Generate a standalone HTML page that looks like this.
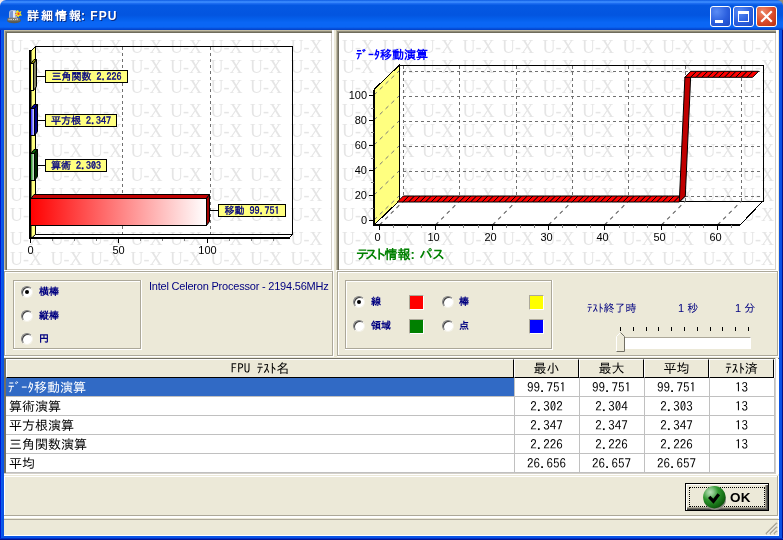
<!DOCTYPE html>
<html lang="ja">
<head>
<meta charset="utf-8">
<title>詳細情報: FPU</title>
<style>
html,body{margin:0;padding:0;}
body{width:783px;height:540px;overflow:hidden;background:#0831d9;font-family:"Liberation Sans","IPAGothic",sans-serif;font-size:12px;position:relative;}
.abs{position:absolute;}
#win{position:absolute;left:0;top:0;width:783px;height:540px;background:#0831d9;overflow:hidden;will-change:transform;}
#title{position:absolute;left:0;top:0;width:783px;height:30px;border-radius:6px 6px 0 0;
 background:linear-gradient(to bottom,#0a58e0 0%,#2f7ff8 4%,#3f8fff 7%,#1a6af0 12%,#0458e2 18%,#0355e0 50%,#0560ec 65%,#0a66f5 75%,#0a66f5 90%,#0650dc 95%,#0340c4 100%);}
#title .cap{position:absolute;left:27px;top:10px;line-height:13px;color:#fff;font-weight:bold;font-size:12px;letter-spacing:2px;text-shadow:1px 1px 0 #0a2a80;white-space:nowrap;}
.tb{position:absolute;top:6px;width:21px;height:21px;box-sizing:border-box;border:1px solid #fff;border-radius:3px;background:radial-gradient(circle at 30% 25%,#5a8cf5 0%,#2b5fde 55%,#1d49c4 100%);}
.tb.cl{background:radial-gradient(circle at 30% 25%,#ee8a6a 0%,#d9492a 55%,#b8300f 100%);}
#client{position:absolute;left:4px;top:30px;width:775px;height:506px;background:#ece9d8;}
.box{position:absolute;box-sizing:border-box;}
.radio{position:absolute;width:12px;height:12px;border-radius:50%;background:#fff;box-sizing:border-box;border:1px solid;border-color:#808080 #f4f2e8 #f4f2e8 #808080;box-shadow:inset 1px 1px 0 #404040;}
.radio.on::after{content:"";position:absolute;left:3px;top:3px;width:4px;height:4px;border-radius:50%;background:#000;}
.rl{position:absolute;color:#000080;font-weight:bold;font-size:10px;white-space:nowrap;line-height:11px;}
.sq{position:absolute;width:15px;height:15px;box-sizing:border-box;border:1px solid;border-color:#aca899 #fff #fff #aca899;}
.t{position:absolute;white-space:nowrap;}
.grp{position:absolute;box-sizing:border-box;border:1px solid;border-color:#aca899 #fff #fff #aca899;}
.grp::after{content:"";position:absolute;left:0;top:0;right:0;bottom:0;border:1px solid;border-color:#fff #aca899 #aca899 #fff;}
svg text{font-family:"Liberation Sans","IPAGothic",sans-serif;}
.cell{position:absolute;height:19px;line-height:19px;font-size:13px;white-space:nowrap;color:#000;font-family:"IPAGothic","Liberation Sans",sans-serif;}
</style>
</head>
<body>
<div id="win">
<div class="box" style="left:0;top:0;width:8px;height:8px;background:#f3e9ea"></div>
<div class="box" style="left:775px;top:0;width:8px;height:8px;background:#8f8c7c"></div>
<div id="title">
  <div class="cap">詳細情報<span style="letter-spacing:1px;font-size:12px;margin-left:-2px">: FPU</span></div>
  <svg class="abs" style="left:6px;top:9px" width="17" height="15" viewBox="0 0 17 15">
    <ellipse cx="8" cy="11.5" rx="7" ry="2.8" fill="#5a5a52"/>
    <path d="M3 9 L3 4 Q3 1 6 1 L9 1 Q11 1 11 4 L11 9 Z" fill="#a9b9d9"/>
    <path d="M4 9 L4 4 Q4 2 6 2 L7 2 L7 9 Z" fill="#7f98cf"/>
    <rect x="7" y="2" width="2" height="7" fill="#dfe7f5"/>
    <path d="M12 1 L13 3 L15.5 2 L14.5 4.5 L16 6.5 L13.5 6.8 L12 8.5 L10.8 6.5 L8.8 6 L10.5 4.2 L10 2.2 Z" fill="#f6e81a"/>
    <rect x="11.5" y="3.5" width="2" height="2.5" fill="#f03a2a"/>
    <rect x="9.3" y="4" width="1" height="1" fill="#f03a2a"/><rect x="9.8" y="6.2" width="1" height="1" fill="#f03a2a"/>
    <rect x="1.5" y="8.8" width="12.5" height="3.4" rx="1.2" fill="#6e6e66"/>
    <path d="M3 9.8 L3 11.2 M4.2 9.8 L4.2 11.2 M5.6 9.8 L5.6 11.2 M7 9.8 L8 11.2 M8 9.8 L7 11.2 M9.5 9.8 L9.5 11.2 M10.5 9.8 L11.8 9.8 M11.2 9.8 L11.2 11.2" stroke="#e8e8e8" stroke-width="0.8" fill="none"/>
  </svg>
  <div class="tb" style="left:710px"><div style="position:absolute;left:4px;top:13px;width:8px;height:3px;background:#fff"></div></div>
  <div class="tb" style="left:733px"><div style="position:absolute;left:4px;top:4px;width:11px;height:11px;box-sizing:border-box;border:1px solid #fff;border-top-width:3px"></div></div>
  <div class="tb cl" style="left:756px"><svg width="19" height="19" viewBox="0 0 19 19" style="position:absolute;left:0;top:0"><path d="M5 5 L14 14 M14 5 L5 14" stroke="#fff" stroke-width="2.2" stroke-linecap="square"/></svg></div>
</div>
<div id="client"></div>
<div class="box" style="left:0;top:30px;width:1px;height:510px;background:#0019cf"></div>
<div class="box" style="left:1px;top:30px;width:3px;height:508px;background:linear-gradient(to right,#0b5ff0,#0a55e6,#0a50e0)"></div>
<div class="box" style="left:779px;top:30px;width:3px;height:508px;background:linear-gradient(to right,#0a50e0,#0a55e6,#0a4fe0)"></div>
<div class="box" style="left:782px;top:30px;width:1px;height:510px;background:#00138c"></div>
<div class="box" style="left:1px;top:536px;width:781px;height:2px;background:#0a55e6"></div>
<div class="box" style="left:0px;top:538px;width:783px;height:1px;background:#0030c8"></div>
<div class="box" style="left:0px;top:539px;width:783px;height:1px;background:#00138c"></div>
<div class="box" style="left:778px;top:476px;width:1px;height:60px;background:#fff"></div>


<div class="box" style="left:4px;top:30px;width:328px;height:240px;background:#c2bca4"></div>
<div class="box" style="left:5px;top:31px;width:327px;height:239px;background:#8f8b78"></div>
<div class="box" style="left:6px;top:32px;width:326px;height:238px;background:#6f6c5c"></div>
<div class="box" style="left:4px;top:270px;width:330px;height:2px;background:#fff"></div>
<div class="box" style="left:332px;top:30px;width:2px;height:242px;background:#fff"></div>
<div class="box" style="left:7px;top:33px;width:325px;height:237px;background:#d4d0c8"></div>
<div class="box" style="left:7px;top:33px;width:324px;height:236px;background:#fff"></div>

<div class="box" style="left:336px;top:30px;width:440px;height:240px;background:#c2bca4"></div>
<div class="box" style="left:337px;top:31px;width:439px;height:239px;background:#8f8b78"></div>
<div class="box" style="left:338px;top:32px;width:438px;height:238px;background:#6f6c5c"></div>
<div class="box" style="left:336px;top:270px;width:442px;height:2px;background:#fff"></div>
<div class="box" style="left:776px;top:30px;width:2px;height:242px;background:#fff"></div>
<div class="box" style="left:339px;top:33px;width:437px;height:237px;background:#d4d0c8"></div>
<div class="box" style="left:339px;top:33px;width:436px;height:236px;background:#fff"></div>

<svg class="abs" style="left:0;top:0" width="783" height="540" viewBox="0 0 783 540" shape-rendering="crispEdges">
<defs><pattern id="uxL" x="7" y="33" width="80" height="64" patternUnits="userSpaceOnUse"><text x="3" y="20" font-size="18" fill="#e5e5e5" style="font-family:'Liberation Serif',serif">U-X</text><text x="43.5" y="20" font-size="18" fill="#e5e5e5" style="font-family:'Liberation Serif',serif">U-X</text><text x="3" y="40" font-size="18" fill="#e5e5e5" style="font-family:'Liberation Serif',serif">U-X</text><text x="43.5" y="40" font-size="18" fill="#e5e5e5" style="font-family:'Liberation Serif',serif">U-X</text><text x="3" y="60" font-size="18" fill="#e5e5e5" style="font-family:'Liberation Serif',serif">U-X</text><text x="43.5" y="60" font-size="18" fill="#e5e5e5" style="font-family:'Liberation Serif',serif">U-X</text></pattern><pattern id="uxR" x="339" y="33" width="80" height="64" patternUnits="userSpaceOnUse"><text x="3" y="20" font-size="18" fill="#e5e5e5" style="font-family:'Liberation Serif',serif">U-X</text><text x="43.5" y="20" font-size="18" fill="#e5e5e5" style="font-family:'Liberation Serif',serif">U-X</text><text x="3" y="40" font-size="18" fill="#e5e5e5" style="font-family:'Liberation Serif',serif">U-X</text><text x="43.5" y="40" font-size="18" fill="#e5e5e5" style="font-family:'Liberation Serif',serif">U-X</text><text x="3" y="60" font-size="18" fill="#e5e5e5" style="font-family:'Liberation Serif',serif">U-X</text><text x="43.5" y="60" font-size="18" fill="#e5e5e5" style="font-family:'Liberation Serif',serif">U-X</text></pattern>
<linearGradient id="redg" x1="0" y1="0" x2="1" y2="0"><stop offset="0" stop-color="#ff0000"/><stop offset="1" stop-color="#ffffff"/></linearGradient>
<linearGradient id="blug" x1="0" y1="0" x2="1" y2="0"><stop offset="0" stop-color="#0000ff"/><stop offset="1" stop-color="#ffffff"/></linearGradient>
<linearGradient id="grng" x1="0" y1="0" x2="1" y2="0"><stop offset="0" stop-color="#008000"/><stop offset="1" stop-color="#ffffff"/></linearGradient>
<linearGradient id="yelg" x1="0" y1="0" x2="1" y2="0"><stop offset="0" stop-color="#ffff00"/><stop offset="1" stop-color="#ffffff"/></linearGradient>
</defs>
<rect x="7" y="33" width="324" height="236" fill="url(#uxL)"/>
<rect x="339" y="33" width="436" height="236" fill="url(#uxR)"/>
<polygon points="31,51 35.5,46.5 35.5,234.5 31,239" fill="#ffff80" stroke="#000" stroke-width="1" shape-rendering="auto"/>
<rect x="35.5" y="46.5" width="257.0" height="188.0" fill="none" stroke="#000"/>
<polygon points="31,238.5 35.5,234.5 292.5,234.5 288.5,238.5" fill="#fff" stroke="#000" stroke-width="1" shape-rendering="auto"/>
<line x1="122.5" y1="46.5" x2="122.5" y2="234.5" stroke="#707070" stroke-width="1" stroke-dasharray="3 3" />
<line x1="210.5" y1="46.5" x2="210.5" y2="234.5" stroke="#707070" stroke-width="1" stroke-dasharray="3 3" />
<line x1="30" y1="50" x2="30" y2="239" stroke="#000" stroke-width="2" />
<line x1="29" y1="238" x2="290" y2="238" stroke="#000" stroke-width="2" />
<line x1="30.5" y1="239" x2="30.5" y2="243" stroke="#000" stroke-width="1" />
<line x1="52.5" y1="239" x2="52.5" y2="241" stroke="#808080" stroke-width="1" />
<line x1="74.5" y1="239" x2="74.5" y2="241" stroke="#808080" stroke-width="1" />
<line x1="96.5" y1="239" x2="96.5" y2="241" stroke="#808080" stroke-width="1" />
<line x1="118.5" y1="239" x2="118.5" y2="243" stroke="#000" stroke-width="1" />
<line x1="140.5" y1="239" x2="140.5" y2="241" stroke="#808080" stroke-width="1" />
<line x1="162.5" y1="239" x2="162.5" y2="241" stroke="#808080" stroke-width="1" />
<line x1="184.5" y1="239" x2="184.5" y2="241" stroke="#808080" stroke-width="1" />
<line x1="207.5" y1="239" x2="207.5" y2="243" stroke="#000" stroke-width="1" />
<line x1="229.5" y1="239" x2="229.5" y2="241" stroke="#808080" stroke-width="1" />
<line x1="251.5" y1="239" x2="251.5" y2="241" stroke="#808080" stroke-width="1" />
<line x1="273.5" y1="239" x2="273.5" y2="241" stroke="#808080" stroke-width="1" />
<polygon points="31,63.5 34,59.5 36.5,59.5 33.5,63.5" fill="#a0a000" stroke="#000" stroke-width="1" shape-rendering="auto"/>
<polygon points="33.5,63.5 36.5,59.5 36.5,86.5 33.5,90.5" fill="#808060" stroke="#000" stroke-width="1" shape-rendering="auto"/>
<rect x="30.5" y="63.5" width="3.0" height="27" fill="url(#yelg)" stroke="#000"/>
<polygon points="31,108.5 34,104.5 37.5,104.5 34.5,108.5" fill="#0000a0" stroke="#000" stroke-width="1" shape-rendering="auto"/>
<polygon points="34.5,108.5 37.5,104.5 37.5,131.5 34.5,135.5" fill="#000080" stroke="#000" stroke-width="1" shape-rendering="auto"/>
<rect x="30.5" y="108.5" width="4.0" height="27" fill="url(#blug)" stroke="#000"/>
<polygon points="31,153.5 34,149.5 37.5,149.5 34.5,153.5" fill="#006000" stroke="#000" stroke-width="1" shape-rendering="auto"/>
<polygon points="34.5,153.5 37.5,149.5 37.5,176.5 34.5,180.5" fill="#002800" stroke="#000" stroke-width="1" shape-rendering="auto"/>
<rect x="30.5" y="153.5" width="4.0" height="27" fill="url(#grng)" stroke="#000"/>
<polygon points="31,198.5 34,194.5 209.5,194.5 206.5,198.5" fill="#c00000" stroke="#000" stroke-width="1" shape-rendering="auto"/>
<polygon points="206.5,198.5 209.5,194.5 209.5,221.5 206.5,225.5" fill="#a00000" stroke="#000" stroke-width="1" shape-rendering="auto"/>
<rect x="30.5" y="198.5" width="176.0" height="27" fill="url(#redg)" stroke="#000"/>
<line x1="37" y1="76.5" x2="45" y2="76.5" stroke="#000" stroke-width="1" />
<rect x="45.5" y="70.5" width="82" height="12" fill="#ffff80" stroke="#000"/>
<text x="86.5" y="79.5" font-size="10" fill="#000080" stroke="#000080" stroke-width="0.35" text-anchor="middle" shape-rendering="auto" style="font-family:IPAGothic,'Liberation Sans',sans-serif">三角関数 2.226</text>
<line x1="37" y1="120.5" x2="45" y2="120.5" stroke="#000" stroke-width="1" />
<rect x="45.5" y="114.5" width="71" height="12" fill="#ffff80" stroke="#000"/>
<text x="81.0" y="123.5" font-size="10" fill="#000080" stroke="#000080" stroke-width="0.35" text-anchor="middle" shape-rendering="auto" style="font-family:IPAGothic,'Liberation Sans',sans-serif">平方根 2.347</text>
<line x1="37" y1="165.5" x2="45" y2="165.5" stroke="#000" stroke-width="1" />
<rect x="45.5" y="159.5" width="61" height="12" fill="#ffff80" stroke="#000"/>
<text x="76.0" y="168.5" font-size="10" fill="#000080" stroke="#000080" stroke-width="0.35" text-anchor="middle" shape-rendering="auto" style="font-family:IPAGothic,'Liberation Sans',sans-serif">算術 2.303</text>
<line x1="210" y1="210.5" x2="218" y2="210.5" stroke="#000" stroke-width="1" />
<rect x="218.5" y="204.5" width="67" height="12" fill="#ffff80" stroke="#000"/>
<text x="252.0" y="213.5" font-size="10" fill="#000080" stroke="#000080" stroke-width="0.35" text-anchor="middle" shape-rendering="auto" style="font-family:IPAGothic,'Liberation Sans',sans-serif">移動 99.751</text>
<text x="30.5" y="254" font-size="11" fill="#000" text-anchor="middle">0</text>
<text x="118.5" y="254" font-size="11" fill="#000" text-anchor="middle">50</text>
<text x="207.5" y="254" font-size="11" fill="#000" text-anchor="middle">100</text>
<polygon points="374.0,89.5 399.0,65.5 399.0,201.0 374.0,225.0" fill="#ffff80" stroke="#000" stroke-width="1" />
<line x1="374.0" y1="220" x2="399.0" y2="196" stroke="#787878" stroke-width="1" stroke-dasharray="4 4" shape-rendering="auto"/>
<line x1="374.0" y1="195" x2="399.0" y2="171" stroke="#787878" stroke-width="1" stroke-dasharray="4 4" shape-rendering="auto"/>
<line x1="374.0" y1="170" x2="399.0" y2="146" stroke="#787878" stroke-width="1" stroke-dasharray="4 4" shape-rendering="auto"/>
<line x1="374.0" y1="145" x2="399.0" y2="121" stroke="#787878" stroke-width="1" stroke-dasharray="4 4" shape-rendering="auto"/>
<line x1="374.0" y1="120" x2="399.0" y2="96" stroke="#787878" stroke-width="1" stroke-dasharray="4 4" shape-rendering="auto"/>
<line x1="374.0" y1="95" x2="399.0" y2="71" stroke="#787878" stroke-width="1" stroke-dasharray="4 4" shape-rendering="auto"/>
<rect x="399.5" y="65.5" width="364.0" height="135.5" fill="none" stroke="#000"/>
<line x1="403.0" y1="196.5" x2="763.0" y2="196.5" stroke="#707070" stroke-width="1" stroke-dasharray="3 3" />
<line x1="403.0" y1="171.5" x2="763.0" y2="171.5" stroke="#707070" stroke-width="1" stroke-dasharray="3 3" />
<line x1="403.0" y1="146.5" x2="763.0" y2="146.5" stroke="#707070" stroke-width="1" stroke-dasharray="3 3" />
<line x1="403.0" y1="121.5" x2="763.0" y2="121.5" stroke="#707070" stroke-width="1" stroke-dasharray="3 3" />
<line x1="403.0" y1="96.5" x2="763.0" y2="96.5" stroke="#707070" stroke-width="1" stroke-dasharray="3 3" />
<line x1="403.0" y1="71.5" x2="763.0" y2="71.5" stroke="#707070" stroke-width="1" stroke-dasharray="3 3" />
<line x1="403.5" y1="65.5" x2="403.5" y2="201.0" stroke="#707070" stroke-width="1" stroke-dasharray="3 3" />
<line x1="459.5" y1="65.5" x2="459.5" y2="201.0" stroke="#707070" stroke-width="1" stroke-dasharray="3 3" />
<line x1="516.5" y1="65.5" x2="516.5" y2="201.0" stroke="#707070" stroke-width="1" stroke-dasharray="3 3" />
<line x1="572.5" y1="65.5" x2="572.5" y2="201.0" stroke="#707070" stroke-width="1" stroke-dasharray="3 3" />
<line x1="628.5" y1="65.5" x2="628.5" y2="201.0" stroke="#707070" stroke-width="1" stroke-dasharray="3 3" />
<line x1="685.5" y1="65.5" x2="685.5" y2="201.0" stroke="#707070" stroke-width="1" stroke-dasharray="3 3" />
<line x1="741.5" y1="65.5" x2="741.5" y2="201.0" stroke="#707070" stroke-width="1" stroke-dasharray="3 3" />
<polygon points="374.0,225.0 399.0,201.0 763.0,201.0 740.0,225.0" fill="#ffffff" stroke="#000" stroke-width="1" />
<line x1="379.5" y1="225.0" x2="403.5" y2="201.0" stroke="#606060" stroke-width="1.1" stroke-dasharray="4 4" shape-rendering="auto"/>
<line x1="435.5" y1="225.0" x2="459.5" y2="201.0" stroke="#606060" stroke-width="1.1" stroke-dasharray="4 4" shape-rendering="auto"/>
<line x1="492.5" y1="225.0" x2="516.5" y2="201.0" stroke="#606060" stroke-width="1.1" stroke-dasharray="4 4" shape-rendering="auto"/>
<line x1="548.5" y1="225.0" x2="572.5" y2="201.0" stroke="#606060" stroke-width="1.1" stroke-dasharray="4 4" shape-rendering="auto"/>
<line x1="604.5" y1="225.0" x2="628.5" y2="201.0" stroke="#606060" stroke-width="1.1" stroke-dasharray="4 4" shape-rendering="auto"/>
<line x1="661.5" y1="225.0" x2="685.5" y2="201.0" stroke="#606060" stroke-width="1.1" stroke-dasharray="4 4" shape-rendering="auto"/>
<line x1="717.5" y1="225.0" x2="741.5" y2="201.0" stroke="#606060" stroke-width="1.1" stroke-dasharray="4 4" shape-rendering="auto"/>
<line x1="374.0" y1="89.5" x2="374.0" y2="226.0" stroke="#000" stroke-width="2" />
<line x1="373.0" y1="225.0" x2="740.0" y2="225.0" stroke="#000" stroke-width="2" />
<line x1="369.0" y1="220.5" x2="374.0" y2="220.5" stroke="#000" stroke-width="1" />
<text x="367" y="224.0" font-size="11" text-anchor="end" fill="#000">0</text>
<line x1="369.0" y1="195.5" x2="374.0" y2="195.5" stroke="#000" stroke-width="1" />
<text x="367" y="199.0" font-size="11" text-anchor="end" fill="#000">20</text>
<line x1="369.0" y1="170.5" x2="374.0" y2="170.5" stroke="#000" stroke-width="1" />
<text x="367" y="174.0" font-size="11" text-anchor="end" fill="#000">40</text>
<line x1="369.0" y1="145.5" x2="374.0" y2="145.5" stroke="#000" stroke-width="1" />
<text x="367" y="149.0" font-size="11" text-anchor="end" fill="#000">60</text>
<line x1="369.0" y1="120.5" x2="374.0" y2="120.5" stroke="#000" stroke-width="1" />
<text x="367" y="124.0" font-size="11" text-anchor="end" fill="#000">80</text>
<line x1="369.0" y1="95.5" x2="374.0" y2="95.5" stroke="#000" stroke-width="1" />
<text x="367" y="99.0" font-size="11" text-anchor="end" fill="#000">100</text>
<line x1="371.0" y1="208.5" x2="374.0" y2="208.5" stroke="#808080" stroke-width="1" />
<line x1="371.0" y1="182.5" x2="374.0" y2="182.5" stroke="#808080" stroke-width="1" />
<line x1="371.0" y1="158.5" x2="374.0" y2="158.5" stroke="#808080" stroke-width="1" />
<line x1="371.0" y1="132.5" x2="374.0" y2="132.5" stroke="#808080" stroke-width="1" />
<line x1="371.0" y1="108.5" x2="374.0" y2="108.5" stroke="#808080" stroke-width="1" />
<line x1="379.5" y1="225.0" x2="379.5" y2="230.0" stroke="#000" stroke-width="1" />
<text x="377.5" y="241" font-size="11" text-anchor="middle" fill="#000">0</text>
<line x1="393.5" y1="225.0" x2="393.5" y2="228.0" stroke="#808080" stroke-width="1" />
<line x1="407.5" y1="225.0" x2="407.5" y2="228.0" stroke="#808080" stroke-width="1" />
<line x1="421.5" y1="225.0" x2="421.5" y2="228.0" stroke="#808080" stroke-width="1" />
<line x1="435.5" y1="225.0" x2="435.5" y2="230.0" stroke="#000" stroke-width="1" />
<text x="433.5" y="241" font-size="11" text-anchor="middle" fill="#000">10</text>
<line x1="449.5" y1="225.0" x2="449.5" y2="228.0" stroke="#808080" stroke-width="1" />
<line x1="463.5" y1="225.0" x2="463.5" y2="228.0" stroke="#808080" stroke-width="1" />
<line x1="478.5" y1="225.0" x2="478.5" y2="228.0" stroke="#808080" stroke-width="1" />
<line x1="492.5" y1="225.0" x2="492.5" y2="230.0" stroke="#000" stroke-width="1" />
<text x="490.5" y="241" font-size="11" text-anchor="middle" fill="#000">20</text>
<line x1="506.5" y1="225.0" x2="506.5" y2="228.0" stroke="#808080" stroke-width="1" />
<line x1="520.5" y1="225.0" x2="520.5" y2="228.0" stroke="#808080" stroke-width="1" />
<line x1="534.5" y1="225.0" x2="534.5" y2="228.0" stroke="#808080" stroke-width="1" />
<line x1="548.5" y1="225.0" x2="548.5" y2="230.0" stroke="#000" stroke-width="1" />
<text x="546.5" y="241" font-size="11" text-anchor="middle" fill="#000">30</text>
<line x1="562.5" y1="225.0" x2="562.5" y2="228.0" stroke="#808080" stroke-width="1" />
<line x1="576.5" y1="225.0" x2="576.5" y2="228.0" stroke="#808080" stroke-width="1" />
<line x1="590.5" y1="225.0" x2="590.5" y2="228.0" stroke="#808080" stroke-width="1" />
<line x1="604.5" y1="225.0" x2="604.5" y2="230.0" stroke="#000" stroke-width="1" />
<text x="602.5" y="241" font-size="11" text-anchor="middle" fill="#000">40</text>
<line x1="619.5" y1="225.0" x2="619.5" y2="228.0" stroke="#808080" stroke-width="1" />
<line x1="633.5" y1="225.0" x2="633.5" y2="228.0" stroke="#808080" stroke-width="1" />
<line x1="647.5" y1="225.0" x2="647.5" y2="228.0" stroke="#808080" stroke-width="1" />
<line x1="661.5" y1="225.0" x2="661.5" y2="230.0" stroke="#000" stroke-width="1" />
<text x="659.5" y="241" font-size="11" text-anchor="middle" fill="#000">50</text>
<line x1="675.5" y1="225.0" x2="675.5" y2="228.0" stroke="#808080" stroke-width="1" />
<line x1="689.5" y1="225.0" x2="689.5" y2="228.0" stroke="#808080" stroke-width="1" />
<line x1="703.5" y1="225.0" x2="703.5" y2="228.0" stroke="#808080" stroke-width="1" />
<line x1="717.5" y1="225.0" x2="717.5" y2="230.0" stroke="#000" stroke-width="1" />
<text x="715.5" y="241" font-size="11" text-anchor="middle" fill="#000">60</text>
<line x1="731.5" y1="225.0" x2="731.5" y2="228.0" stroke="#808080" stroke-width="1" />
<polygon points="397.3,202.0 403.3,196.0 408.9,196.0 402.9,202.0" fill="#ff0000" stroke="#000" stroke-width="1" shape-rendering="auto"/>
<polygon points="402.9,202.0 408.9,196.0 414.6,196.0 408.6,202.0" fill="#ff0000" stroke="#000" stroke-width="1" shape-rendering="auto"/>
<polygon points="408.6,202.0 414.6,196.0 420.2,196.0 414.2,202.0" fill="#ff0000" stroke="#000" stroke-width="1" shape-rendering="auto"/>
<polygon points="414.2,202.0 420.2,196.0 425.9,196.0 419.9,202.0" fill="#ff0000" stroke="#000" stroke-width="1" shape-rendering="auto"/>
<polygon points="419.9,202.0 425.9,196.0 431.5,196.0 425.5,202.0" fill="#ff0000" stroke="#000" stroke-width="1" shape-rendering="auto"/>
<polygon points="425.5,202.0 431.5,196.0 437.1,196.0 431.1,202.0" fill="#ff0000" stroke="#000" stroke-width="1" shape-rendering="auto"/>
<polygon points="431.1,202.0 437.1,196.0 442.8,196.0 436.8,202.0" fill="#ff0000" stroke="#000" stroke-width="1" shape-rendering="auto"/>
<polygon points="436.8,202.0 442.8,196.0 448.4,196.0 442.4,202.0" fill="#ff0000" stroke="#000" stroke-width="1" shape-rendering="auto"/>
<polygon points="442.4,202.0 448.4,196.0 454.1,196.0 448.1,202.0" fill="#ff0000" stroke="#000" stroke-width="1" shape-rendering="auto"/>
<polygon points="448.1,202.0 454.1,196.0 459.7,196.0 453.7,202.0" fill="#ff0000" stroke="#000" stroke-width="1" shape-rendering="auto"/>
<polygon points="453.7,202.0 459.7,196.0 465.3,196.0 459.3,202.0" fill="#ff0000" stroke="#000" stroke-width="1" shape-rendering="auto"/>
<polygon points="459.3,202.0 465.3,196.0 471.0,196.0 465.0,202.0" fill="#ff0000" stroke="#000" stroke-width="1" shape-rendering="auto"/>
<polygon points="465.0,202.0 471.0,196.0 476.6,196.0 470.6,202.0" fill="#ff0000" stroke="#000" stroke-width="1" shape-rendering="auto"/>
<polygon points="470.6,202.0 476.6,196.0 482.3,196.0 476.3,202.0" fill="#ff0000" stroke="#000" stroke-width="1" shape-rendering="auto"/>
<polygon points="476.3,202.0 482.3,196.0 487.9,196.0 481.9,202.0" fill="#ff0000" stroke="#000" stroke-width="1" shape-rendering="auto"/>
<polygon points="481.9,202.0 487.9,196.0 493.5,196.0 487.5,202.0" fill="#ff0000" stroke="#000" stroke-width="1" shape-rendering="auto"/>
<polygon points="487.5,202.0 493.5,196.0 499.2,196.0 493.2,202.0" fill="#ff0000" stroke="#000" stroke-width="1" shape-rendering="auto"/>
<polygon points="493.2,202.0 499.2,196.0 504.8,196.0 498.8,202.0" fill="#ff0000" stroke="#000" stroke-width="1" shape-rendering="auto"/>
<polygon points="498.8,202.0 504.8,196.0 510.5,196.0 504.5,202.0" fill="#ff0000" stroke="#000" stroke-width="1" shape-rendering="auto"/>
<polygon points="504.5,202.0 510.5,196.0 516.1,196.0 510.1,202.0" fill="#ff0000" stroke="#000" stroke-width="1" shape-rendering="auto"/>
<polygon points="510.1,202.0 516.1,196.0 521.7,196.0 515.7,202.0" fill="#ff0000" stroke="#000" stroke-width="1" shape-rendering="auto"/>
<polygon points="515.7,202.0 521.7,196.0 527.4,196.0 521.4,202.0" fill="#ff0000" stroke="#000" stroke-width="1" shape-rendering="auto"/>
<polygon points="521.4,202.0 527.4,196.0 533.0,196.0 527.0,202.0" fill="#ff0000" stroke="#000" stroke-width="1" shape-rendering="auto"/>
<polygon points="527.0,202.0 533.0,196.0 538.7,196.0 532.7,202.0" fill="#ff0000" stroke="#000" stroke-width="1" shape-rendering="auto"/>
<polygon points="532.7,202.0 538.7,196.0 544.3,196.0 538.3,202.0" fill="#ff0000" stroke="#000" stroke-width="1" shape-rendering="auto"/>
<polygon points="538.3,202.0 544.3,196.0 549.9,196.0 543.9,202.0" fill="#ff0000" stroke="#000" stroke-width="1" shape-rendering="auto"/>
<polygon points="543.9,202.0 549.9,196.0 555.6,196.0 549.6,202.0" fill="#ff0000" stroke="#000" stroke-width="1" shape-rendering="auto"/>
<polygon points="549.6,202.0 555.6,196.0 561.2,196.0 555.2,202.0" fill="#ff0000" stroke="#000" stroke-width="1" shape-rendering="auto"/>
<polygon points="555.2,202.0 561.2,196.0 566.9,196.0 560.9,202.0" fill="#ff0000" stroke="#000" stroke-width="1" shape-rendering="auto"/>
<polygon points="560.9,202.0 566.9,196.0 572.5,196.0 566.5,202.0" fill="#ff0000" stroke="#000" stroke-width="1" shape-rendering="auto"/>
<polygon points="566.5,202.0 572.5,196.0 578.1,196.0 572.1,202.0" fill="#ff0000" stroke="#000" stroke-width="1" shape-rendering="auto"/>
<polygon points="572.1,202.0 578.1,196.0 583.8,196.0 577.8,202.0" fill="#ff0000" stroke="#000" stroke-width="1" shape-rendering="auto"/>
<polygon points="577.8,202.0 583.8,196.0 589.4,196.0 583.4,202.0" fill="#ff0000" stroke="#000" stroke-width="1" shape-rendering="auto"/>
<polygon points="583.4,202.0 589.4,196.0 595.1,196.0 589.1,202.0" fill="#ff0000" stroke="#000" stroke-width="1" shape-rendering="auto"/>
<polygon points="589.1,202.0 595.1,196.0 600.7,196.0 594.7,202.0" fill="#ff0000" stroke="#000" stroke-width="1" shape-rendering="auto"/>
<polygon points="594.7,202.0 600.7,196.0 606.3,196.0 600.3,202.0" fill="#ff0000" stroke="#000" stroke-width="1" shape-rendering="auto"/>
<polygon points="600.3,202.0 606.3,196.0 612.0,196.0 606.0,202.0" fill="#ff0000" stroke="#000" stroke-width="1" shape-rendering="auto"/>
<polygon points="606.0,202.0 612.0,196.0 617.6,196.0 611.6,202.0" fill="#ff0000" stroke="#000" stroke-width="1" shape-rendering="auto"/>
<polygon points="611.6,202.0 617.6,196.0 623.3,196.0 617.3,202.0" fill="#ff0000" stroke="#000" stroke-width="1" shape-rendering="auto"/>
<polygon points="617.3,202.0 623.3,196.0 628.9,196.0 622.9,202.0" fill="#ff0000" stroke="#000" stroke-width="1" shape-rendering="auto"/>
<polygon points="622.9,202.0 628.9,196.0 634.5,196.0 628.5,202.0" fill="#ff0000" stroke="#000" stroke-width="1" shape-rendering="auto"/>
<polygon points="628.5,202.0 634.5,196.0 640.2,196.0 634.2,202.0" fill="#ff0000" stroke="#000" stroke-width="1" shape-rendering="auto"/>
<polygon points="634.2,202.0 640.2,196.0 645.8,196.0 639.8,202.0" fill="#ff0000" stroke="#000" stroke-width="1" shape-rendering="auto"/>
<polygon points="639.8,202.0 645.8,196.0 651.5,196.0 645.5,202.0" fill="#ff0000" stroke="#000" stroke-width="1" shape-rendering="auto"/>
<polygon points="645.5,202.0 651.5,196.0 657.1,196.0 651.1,202.0" fill="#ff0000" stroke="#000" stroke-width="1" shape-rendering="auto"/>
<polygon points="651.1,202.0 657.1,196.0 662.7,196.0 656.7,202.0" fill="#ff0000" stroke="#000" stroke-width="1" shape-rendering="auto"/>
<polygon points="656.7,202.0 662.7,196.0 668.4,196.0 662.4,202.0" fill="#ff0000" stroke="#000" stroke-width="1" shape-rendering="auto"/>
<polygon points="662.4,202.0 668.4,196.0 674.0,196.0 668.0,202.0" fill="#ff0000" stroke="#000" stroke-width="1" shape-rendering="auto"/>
<polygon points="668.0,202.0 674.0,196.0 679.7,196.0 673.7,202.0" fill="#ff0000" stroke="#000" stroke-width="1" shape-rendering="auto"/>
<polygon points="673.7,202.0 679.7,196.0 685.3,196.0 679.3,202.0" fill="#ff0000" stroke="#000" stroke-width="1" shape-rendering="auto"/>
<polygon points="679.3,202.0 685.3,196.0 690.9,71.3 684.9,77.3" fill="#c00000" stroke="#000" stroke-width="1" shape-rendering="auto"/>
<polygon points="684.9,77.3 690.9,71.3 696.6,71.3 690.6,77.3" fill="#ff0000" stroke="#000" stroke-width="1" shape-rendering="auto"/>
<polygon points="690.6,77.3 696.6,71.3 702.2,71.3 696.2,77.3" fill="#ff0000" stroke="#000" stroke-width="1" shape-rendering="auto"/>
<polygon points="696.2,77.3 702.2,71.3 707.9,71.3 701.9,77.3" fill="#ff0000" stroke="#000" stroke-width="1" shape-rendering="auto"/>
<polygon points="701.9,77.3 707.9,71.3 713.5,71.3 707.5,77.3" fill="#ff0000" stroke="#000" stroke-width="1" shape-rendering="auto"/>
<polygon points="707.5,77.3 713.5,71.3 719.1,71.3 713.1,77.3" fill="#ff0000" stroke="#000" stroke-width="1" shape-rendering="auto"/>
<polygon points="713.1,77.3 719.1,71.3 724.8,71.3 718.8,77.3" fill="#ff0000" stroke="#000" stroke-width="1" shape-rendering="auto"/>
<polygon points="718.8,77.3 724.8,71.3 730.4,71.3 724.4,77.3" fill="#ff0000" stroke="#000" stroke-width="1" shape-rendering="auto"/>
<polygon points="724.4,77.3 730.4,71.3 736.1,71.3 730.1,77.3" fill="#ff0000" stroke="#000" stroke-width="1" shape-rendering="auto"/>
<polygon points="730.1,77.3 736.1,71.3 741.7,71.3 735.7,77.3" fill="#ff0000" stroke="#000" stroke-width="1" shape-rendering="auto"/>
<polygon points="735.7,77.3 741.7,71.3 747.3,71.3 741.3,77.3" fill="#ff0000" stroke="#000" stroke-width="1" shape-rendering="auto"/>
<polygon points="741.3,77.3 747.3,71.3 753.0,71.3 747.0,77.3" fill="#ff0000" stroke="#000" stroke-width="1" shape-rendering="auto"/>
<polygon points="747.0,77.3 753.0,71.3 758.6,71.3 752.6,77.3" fill="#ff0000" stroke="#000" stroke-width="1" shape-rendering="auto"/>
<text x="356" y="59" font-size="12" font-weight="bold" fill="#0000ff">ﾃﾞｰﾀ移動演算</text>
<text x="356" y="259" font-size="13" font-weight="bold" fill="#008000"><tspan letter-spacing="-4">テスト</tspan><tspan dx="1.5">情報:</tspan> <tspan dx="1" letter-spacing="-0.5">パス</tspan></text>
</svg>
<div class="box" style="left:4px;top:271px;width:329px;height:1px;background:#aca899;"></div>
<div class="box" style="left:4px;top:271px;width:1px;height:85px;background:#aca899;"></div>
<div class="box" style="left:5px;top:272px;width:327px;height:1px;background:#ffffff;"></div>
<div class="box" style="left:5px;top:272px;width:1px;height:83px;background:#ffffff;"></div>
<div class="box" style="left:4px;top:356px;width:330px;height:1px;background:#ffffff;"></div>
<div class="box" style="left:333px;top:271px;width:1px;height:86px;background:#ffffff;"></div>
<div class="box" style="left:5px;top:355px;width:328px;height:1px;background:#aca899;"></div>
<div class="box" style="left:332px;top:272px;width:1px;height:84px;background:#aca899;"></div>
<div class="box" style="left:337px;top:271px;width:441px;height:1px;background:#aca899;"></div>
<div class="box" style="left:337px;top:271px;width:1px;height:85px;background:#aca899;"></div>
<div class="box" style="left:338px;top:272px;width:439px;height:1px;background:#ffffff;"></div>
<div class="box" style="left:338px;top:272px;width:1px;height:83px;background:#ffffff;"></div>
<div class="box" style="left:337px;top:356px;width:442px;height:1px;background:#ffffff;"></div>
<div class="box" style="left:778px;top:271px;width:1px;height:86px;background:#ffffff;"></div>
<div class="box" style="left:338px;top:355px;width:440px;height:1px;background:#aca899;"></div>
<div class="box" style="left:777px;top:272px;width:1px;height:84px;background:#aca899;"></div>
<div class="box" style="left:13px;top:280px;width:128px;height:1px;background:#aca899;"></div>
<div class="box" style="left:13px;top:280px;width:1px;height:69px;background:#aca899;"></div>
<div class="box" style="left:14px;top:281px;width:126px;height:1px;background:#ffffff;"></div>
<div class="box" style="left:14px;top:281px;width:1px;height:67px;background:#ffffff;"></div>
<div class="box" style="left:13px;top:349px;width:129px;height:1px;background:#ffffff;"></div>
<div class="box" style="left:141px;top:280px;width:1px;height:70px;background:#ffffff;"></div>
<div class="box" style="left:14px;top:348px;width:127px;height:1px;background:#aca899;"></div>
<div class="box" style="left:140px;top:281px;width:1px;height:68px;background:#aca899;"></div>
<div class="box" style="left:345px;top:280px;width:207px;height:1px;background:#aca899;"></div>
<div class="box" style="left:345px;top:280px;width:1px;height:69px;background:#aca899;"></div>
<div class="box" style="left:346px;top:281px;width:205px;height:1px;background:#ffffff;"></div>
<div class="box" style="left:346px;top:281px;width:1px;height:67px;background:#ffffff;"></div>
<div class="box" style="left:345px;top:349px;width:208px;height:1px;background:#ffffff;"></div>
<div class="box" style="left:552px;top:280px;width:1px;height:70px;background:#ffffff;"></div>
<div class="box" style="left:346px;top:348px;width:206px;height:1px;background:#aca899;"></div>
<div class="box" style="left:551px;top:281px;width:1px;height:68px;background:#aca899;"></div>
<div class="radio on" style="left:21px;top:286px"></div>
<div class="rl" style="left:39px;top:286px">横棒</div>
<div class="radio" style="left:21px;top:310px"></div>
<div class="rl" style="left:39px;top:310px">縦棒</div>
<div class="radio" style="left:21px;top:333px"></div>
<div class="rl" style="left:39px;top:333px">円</div>
<div class="radio on" style="left:353px;top:296px"></div>
<div class="rl" style="left:371px;top:296px">線</div>
<div class="radio" style="left:353px;top:320px"></div>
<div class="rl" style="left:371px;top:320px">領域</div>
<div class="radio" style="left:442px;top:296px"></div>
<div class="rl" style="left:459px;top:296px">棒</div>
<div class="radio" style="left:442px;top:320px"></div>
<div class="rl" style="left:459px;top:320px">点</div>
<div class="sq" style="left:409px;top:295px;background:#ff0000"></div>
<div class="sq" style="left:409px;top:319px;background:#008000"></div>
<div class="sq" style="left:529px;top:295px;background:#ffff00"></div>
<div class="sq" style="left:529px;top:319px;background:#0000ff"></div>
<div class="t" style="left:149px;top:280px;font-size:11px;color:#000080;line-height:13px;letter-spacing:-0.21px">Intel Celeron Processor - 2194.56MHz</div>
<div class="t" style="left:587px;top:302px;font-size:11px;color:#000080;line-height:13px;">ﾃｽﾄ終了時</div>
<div class="t" style="left:678px;top:302px;font-size:11px;color:#000080;line-height:13px">1 秒</div>
<div class="t" style="left:735px;top:302px;font-size:11px;color:#000080;line-height:13px">1 分</div>
<div class="box" style="left:620px;top:327px;width:1px;height:4px;background:#000;"></div>
<div class="box" style="left:633px;top:327px;width:1px;height:4px;background:#000;"></div>
<div class="box" style="left:646px;top:327px;width:1px;height:4px;background:#000;"></div>
<div class="box" style="left:658px;top:327px;width:1px;height:4px;background:#000;"></div>
<div class="box" style="left:671px;top:327px;width:1px;height:4px;background:#000;"></div>
<div class="box" style="left:684px;top:327px;width:1px;height:4px;background:#000;"></div>
<div class="box" style="left:697px;top:327px;width:1px;height:4px;background:#000;"></div>
<div class="box" style="left:710px;top:327px;width:1px;height:4px;background:#000;"></div>
<div class="box" style="left:722px;top:327px;width:1px;height:4px;background:#000;"></div>
<div class="box" style="left:735px;top:327px;width:1px;height:4px;background:#000;"></div>
<div class="box" style="left:748px;top:327px;width:1px;height:4px;background:#000;"></div>
<div class="box" style="left:618px;top:337px;width:133px;height:12px;background:#fff;border:1px solid;border-color:#aca899 #fff #fff #aca899;"></div>
<svg class="abs" style="left:615px;top:331px" width="12" height="22" viewBox="0 0 12 22"><path d="M1.5 5.5 L5.5 1.5 L9.5 5.5 L9.5 20.5 L1.5 20.5 Z" fill="#ece9d8" stroke="#fff" stroke-width="1"/><path d="M5.5 1.5 L9.5 5.5 L9.5 20.5 L1.5 20.5" fill="none" stroke="#716f64" stroke-width="1"/></svg>
<div class="box" style="left:4px;top:358px;width:775px;height:116px;background:#ffffff;"></div>
<div class="box" style="left:4px;top:358px;width:775px;height:1px;background:#716f64;"></div>
<div class="box" style="left:4px;top:358px;width:2px;height:116px;background:#716f64;"></div>
<div class="box" style="left:6px;top:359px;width:508px;height:19px;background:#ece9d8;border:1px solid;border-color:#fff #000 #000 #fff;"></div>
<div class="box" style="left:514px;top:359px;width:65px;height:19px;background:#ece9d8;border:1px solid;border-color:#fff #000 #000 #fff;"></div>
<div class="box" style="left:579px;top:359px;width:65px;height:19px;background:#ece9d8;border:1px solid;border-color:#fff #000 #000 #fff;"></div>
<div class="box" style="left:644px;top:359px;width:65px;height:19px;background:#ece9d8;border:1px solid;border-color:#fff #000 #000 #fff;"></div>
<div class="box" style="left:709px;top:359px;width:65px;height:19px;background:#ece9d8;border:1px solid;border-color:#fff #000 #000 #fff;"></div>
<div class="cell" style="left:6px;top:359px;width:508px;text-align:center;height:19px;line-height:19px">FPU ﾃｽﾄ名</div>
<div class="cell" style="left:514px;top:359px;width:65px;text-align:center;height:19px;line-height:19px">最小</div>
<div class="cell" style="left:579px;top:359px;width:65px;text-align:center;height:19px;line-height:19px">最大</div>
<div class="cell" style="left:644px;top:359px;width:65px;text-align:center;height:19px;line-height:19px">平均</div>
<div class="cell" style="left:709px;top:359px;width:65px;text-align:center;height:19px;line-height:19px">ﾃｽﾄ済</div>
<div class="box" style="left:6px;top:378px;width:508px;height:19px;background:#316ac5;"></div>
<div class="box" style="left:6px;top:396px;width:769px;height:1px;background:#c0c0c0;"></div>
<div class="cell" style="left:8px;top:378px;color:#fff;">ﾃﾞｰﾀ移動演算</div>
<div class="cell" style="left:514px;top:378px;width:65px;text-align:center">99.751</div>
<div class="cell" style="left:579px;top:378px;width:65px;text-align:center">99.751</div>
<div class="cell" style="left:644px;top:378px;width:65px;text-align:center">99.751</div>
<div class="cell" style="left:709px;top:378px;width:65px;text-align:center">13</div>
<div class="box" style="left:6px;top:415px;width:769px;height:1px;background:#c0c0c0;"></div>
<div class="cell" style="left:9px;top:397px;">算術演算</div>
<div class="cell" style="left:514px;top:397px;width:65px;text-align:center">2.302</div>
<div class="cell" style="left:579px;top:397px;width:65px;text-align:center">2.304</div>
<div class="cell" style="left:644px;top:397px;width:65px;text-align:center">2.303</div>
<div class="cell" style="left:709px;top:397px;width:65px;text-align:center">13</div>
<div class="box" style="left:6px;top:434px;width:769px;height:1px;background:#c0c0c0;"></div>
<div class="cell" style="left:9px;top:416px;">平方根演算</div>
<div class="cell" style="left:514px;top:416px;width:65px;text-align:center">2.347</div>
<div class="cell" style="left:579px;top:416px;width:65px;text-align:center">2.347</div>
<div class="cell" style="left:644px;top:416px;width:65px;text-align:center">2.347</div>
<div class="cell" style="left:709px;top:416px;width:65px;text-align:center">13</div>
<div class="box" style="left:6px;top:453px;width:769px;height:1px;background:#c0c0c0;"></div>
<div class="cell" style="left:9px;top:435px;">三角関数演算</div>
<div class="cell" style="left:514px;top:435px;width:65px;text-align:center">2.226</div>
<div class="cell" style="left:579px;top:435px;width:65px;text-align:center">2.226</div>
<div class="cell" style="left:644px;top:435px;width:65px;text-align:center">2.226</div>
<div class="cell" style="left:709px;top:435px;width:65px;text-align:center">13</div>
<div class="box" style="left:6px;top:472px;width:769px;height:1px;background:#c0c0c0;"></div>
<div class="cell" style="left:9px;top:454px;">平均</div>
<div class="cell" style="left:514px;top:454px;width:65px;text-align:center">26.656</div>
<div class="cell" style="left:579px;top:454px;width:65px;text-align:center">26.657</div>
<div class="cell" style="left:644px;top:454px;width:65px;text-align:center">26.657</div>
<div class="cell" style="left:709px;top:454px;width:65px;text-align:center"></div>
<div class="box" style="left:514px;top:378px;width:1px;height:95px;background:#c0c0c0;"></div>
<div class="box" style="left:579px;top:378px;width:1px;height:95px;background:#c0c0c0;"></div>
<div class="box" style="left:644px;top:378px;width:1px;height:95px;background:#c0c0c0;"></div>
<div class="box" style="left:709px;top:378px;width:1px;height:95px;background:#c0c0c0;"></div>
<div class="box" style="left:774px;top:378px;width:1px;height:95px;background:#c0c0c0;"></div>
<div class="box" style="left:775px;top:358px;width:1px;height:116px;background:#d4d0c8;"></div>
<div class="box" style="left:4px;top:473px;width:772px;height:1px;background:#d4d0c8;"></div>
<div class="box" style="left:776px;top:358px;width:2px;height:117px;background:#fff;"></div>
<div class="box" style="left:4px;top:474px;width:774px;height:1px;background:#fff;"></div>
<div class="box" style="left:4px;top:476px;width:774px;height:1px;background:#fff;"></div>
<div class="box" style="left:4px;top:476px;width:1px;height:40px;background:#fff;"></div>
<div class="box" style="left:4px;top:515px;width:774px;height:1px;background:#aca899;"></div>
<div class="box" style="left:777px;top:476px;width:1px;height:40px;background:#aca899;"></div>
<div class="box" style="left:4px;top:516px;width:775px;height:2px;background:#fff;"></div>
<div class="box" style="left:4px;top:519px;width:775px;height:1px;background:#aca899;"></div>
<div class="box" style="left:4px;top:535px;width:775px;height:1px;background:#fff;"></div>
<div class="box" style="left:685px;top:483px;width:84px;height:28px;background:#ece9d8;border:1px solid #000;box-shadow:inset 1px 1px 0 #fff, inset -1px -1px 0 #404040, inset -2px -2px 0 #716f64, inset -3px -3px 0 #aca899;"></div>
<div class="box" style="left:689px;top:487px;width:76px;height:20px;border:1px dotted #000;"></div>
<svg class="abs" style="left:700px;top:484px" width="30" height="28" viewBox="0 0 30 28">
<defs><radialGradient id="okg" cx="0.32" cy="0.28" r="0.8"><stop offset="0" stop-color="#b8e0b8"/><stop offset="0.18" stop-color="#8cc88c"/><stop offset="0.45" stop-color="#2f962f"/><stop offset="0.8" stop-color="#146c14"/><stop offset="1" stop-color="#0a4a0a"/></radialGradient></defs>
<ellipse cx="15" cy="15.5" rx="11" ry="10.5" fill="#8c8c84"/>
<circle cx="14.3" cy="13.2" r="11.2" fill="url(#okg)"/>
<path d="M9.2 12.8 L13.4 17.2 L18.8 10.2" fill="none" stroke="#000" stroke-width="3.2" stroke-linejoin="miter"/>
</svg>
<div class="t" style="left:730px;top:490px;font-size:13.5px;font-weight:bold;color:#000;line-height:16px;letter-spacing:0.3px">OK</div>
<svg class="abs" style="left:765px;top:522px" width="13" height="13" viewBox="0 0 13 13">
<path d="M12 1 L1 12 M12 5 L5 12 M12 9 L9 12" stroke="#aca899" stroke-width="1.8"/>
<path d="M12 2.2 L2.2 12 M12 6.2 L6.2 12 M12 10.2 L10.2 12" stroke="#fff" stroke-width="0.8"/>
</svg>
</div>
</body>
</html>
